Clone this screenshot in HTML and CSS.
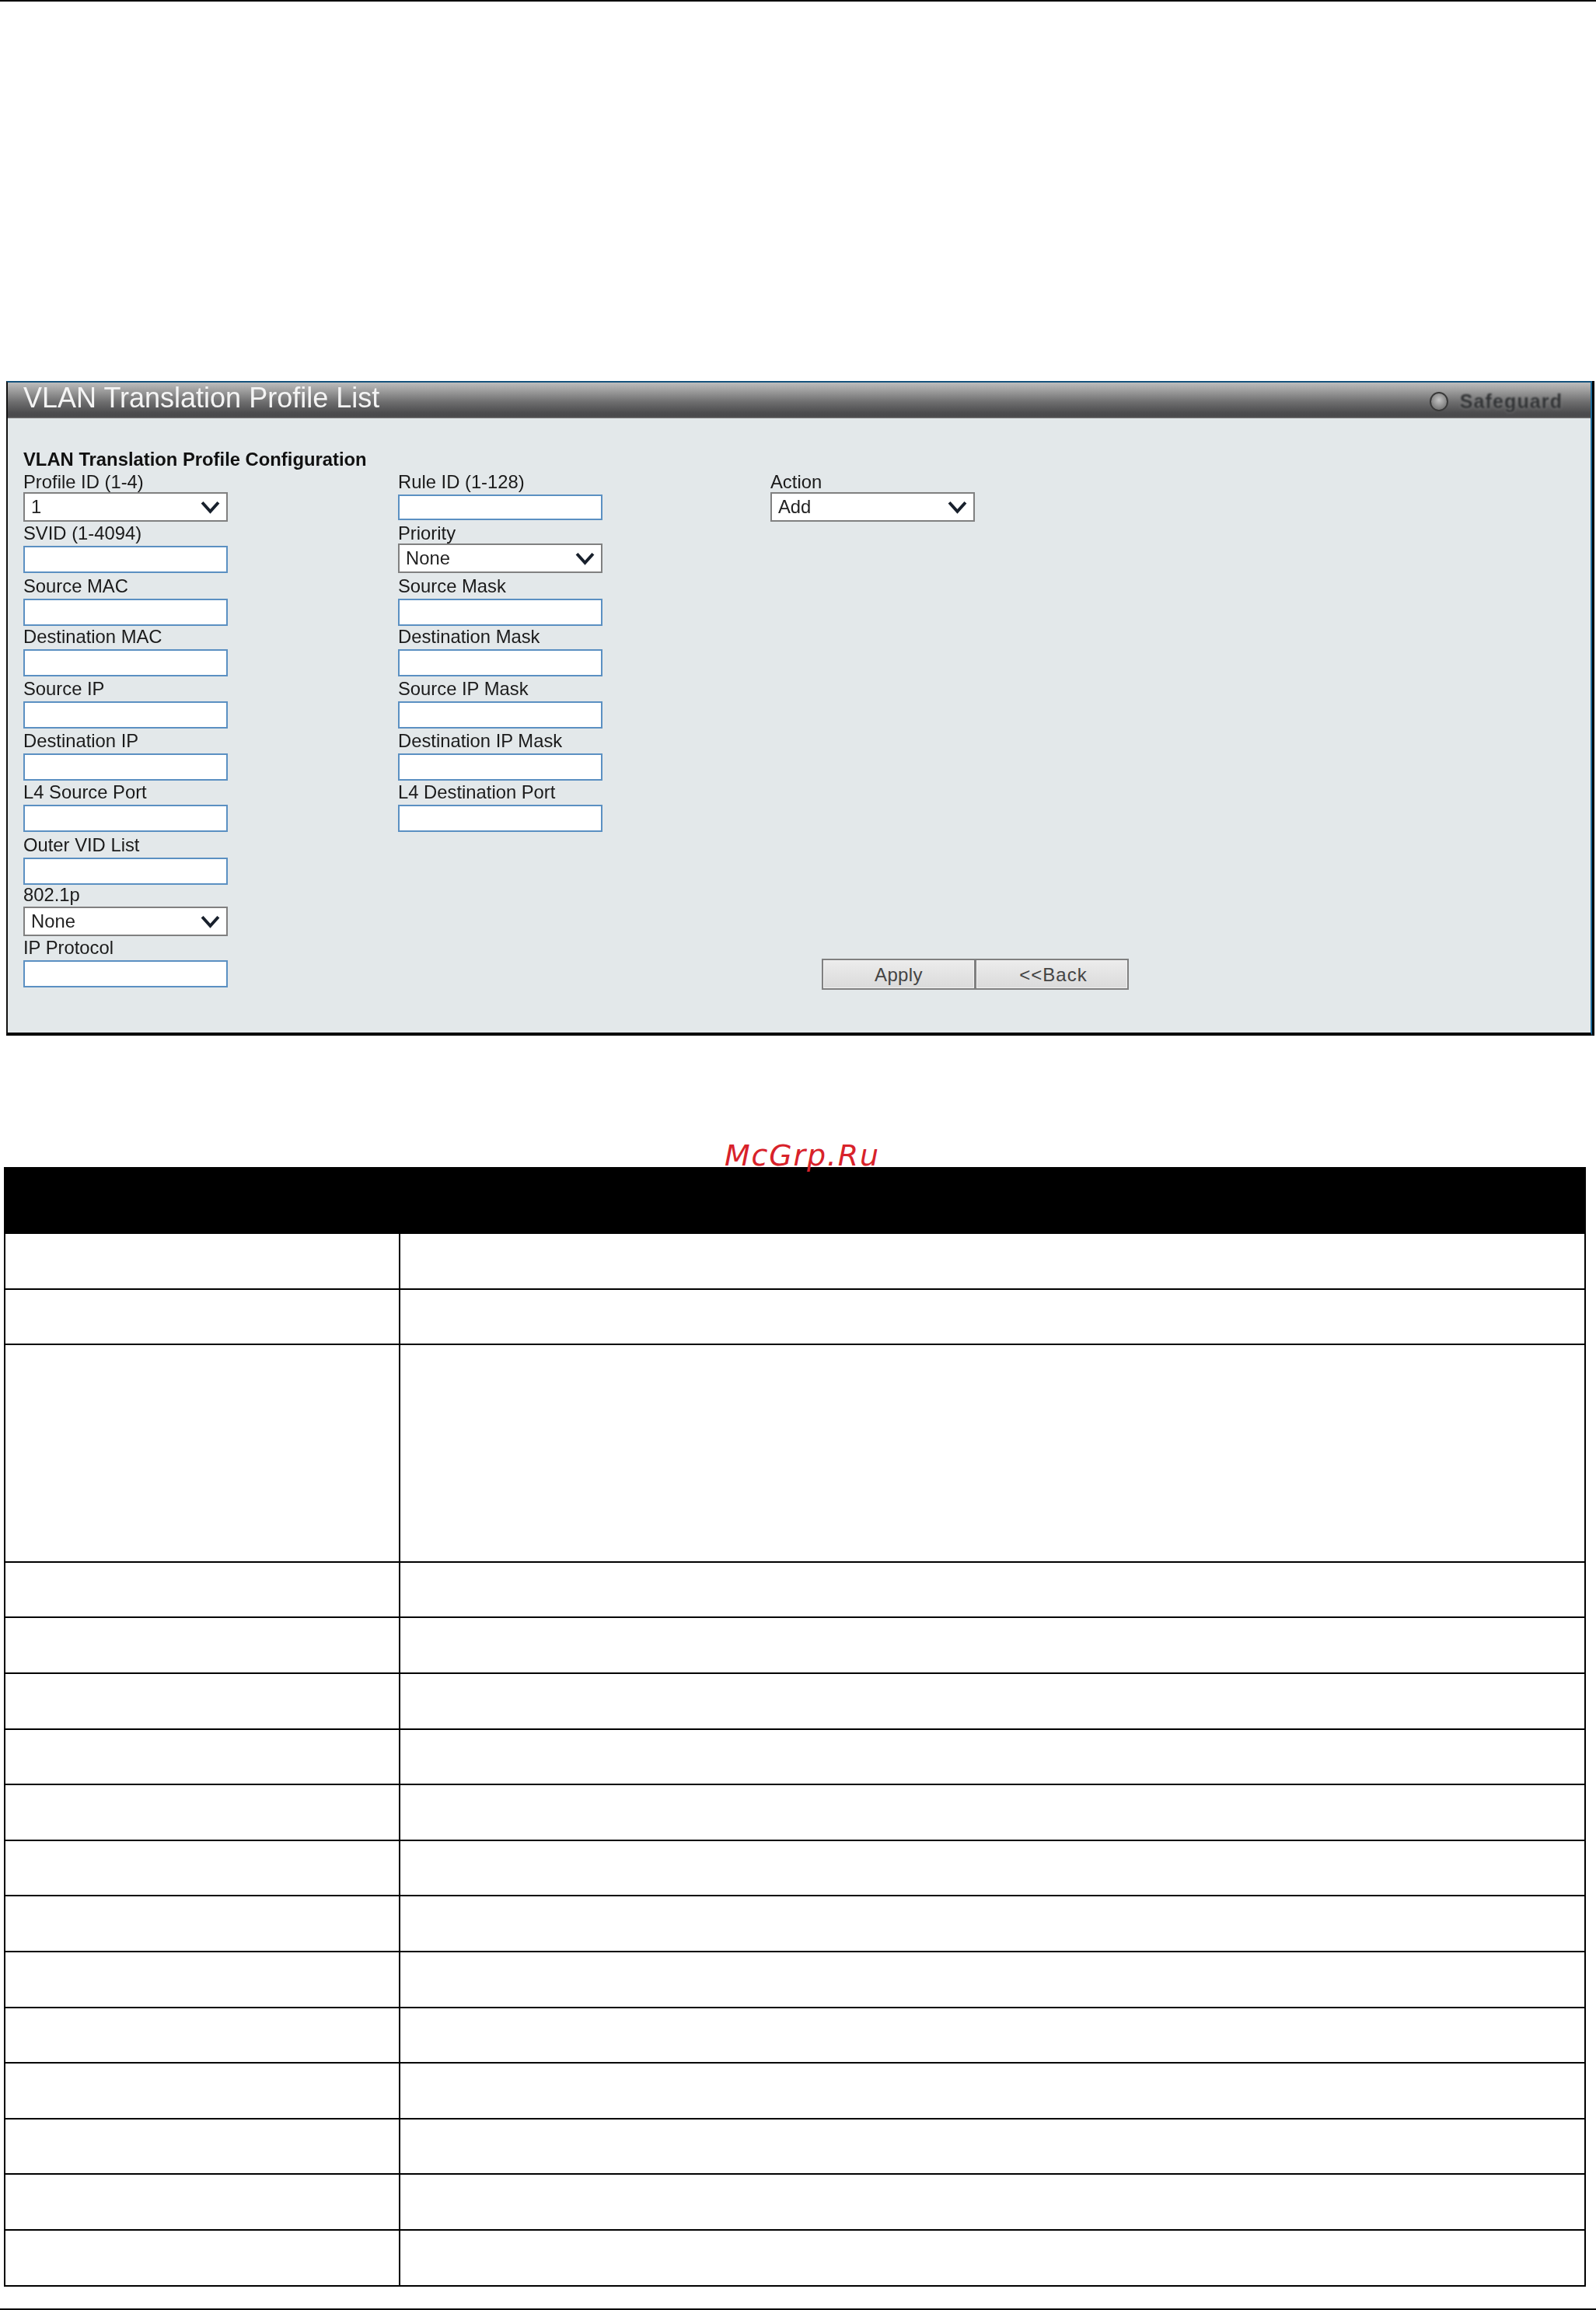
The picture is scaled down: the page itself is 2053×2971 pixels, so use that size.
FILE: index.html
```html
<!DOCTYPE html>
<html lang="en">
<head>
<meta charset="utf-8">
<title>VLAN Translation Profile List</title>
<link rel="stylesheet" href="styles.css">
</head>
<body>
<section class="panel">
  <header class="titlebar">
    <h1 class="title">VLAN Translation Profile List</h1>
    <div class="safeguard"><span class="led"></span><span class="safe-text">Safeguard</span></div>
  </header>
  <div class="panel-body">
    <h2 class="heading">VLAN Translation Profile Configuration</h2>
    <div class="form-grid">
      <div class="field"><label class="label">Profile ID (1-4)</label><div class="select"><span>1</span><svg class="chev" viewBox="0 0 24 16"><polyline points="2,2 12,13 22,2"/></svg></div></div>
      <div class="field"><label class="label">Rule ID (1-128)</label><div class="input input-short"></div></div>
      <div class="field"><label class="label">Action</label><div class="select"><span>Add</span><svg class="chev" viewBox="0 0 24 16"><polyline points="2,2 12,13 22,2"/></svg></div></div>

      <div class="field"><label class="label">SVID (1-4094)</label><div class="input"></div></div>
      <div class="field field-wide"><label class="label">Priority</label><div class="select"><span>None</span><svg class="chev" viewBox="0 0 24 16"><polyline points="2,2 12,13 22,2"/></svg></div></div>

      <div class="field"><label class="label">Source MAC</label><div class="input"></div></div>
      <div class="field field-wide"><label class="label">Source Mask</label><div class="input"></div></div>

      <div class="field"><label class="label">Destination MAC</label><div class="input"></div></div>
      <div class="field field-wide"><label class="label">Destination Mask</label><div class="input"></div></div>

      <div class="field"><label class="label">Source IP</label><div class="input"></div></div>
      <div class="field field-wide"><label class="label">Source IP Mask</label><div class="input"></div></div>

      <div class="field"><label class="label">Destination IP</label><div class="input"></div></div>
      <div class="field field-wide"><label class="label">Destination IP Mask</label><div class="input"></div></div>

      <div class="field"><label class="label">L4 Source Port</label><div class="input"></div></div>
      <div class="field field-wide"><label class="label">L4 Destination Port</label><div class="input"></div></div>

      <div class="field field-full"><label class="label">Outer VID List</label><div class="input"></div></div>

      <div class="field field-full"><label class="label">802.1p</label><div class="select select-low"><span>None</span><svg class="chev" viewBox="0 0 24 16"><polyline points="2,2 12,13 22,2"/></svg></div></div>

      <div class="field"><label class="label">IP Protocol</label><div class="input"></div></div>
      <div class="empty-cell"></div>
      <div class="buttons"><button class="btn" type="button">Apply</button><button class="btn btn-back" type="button">&lt;&lt;Back</button></div>
    </div>
  </div>
</section>

<div class="table-wrap">
  <div class="watermark">McGrp.Ru</div>
  <div class="table">
    <div class="thead"></div>
    <div class="row"><div class="cell-a"></div><div class="cell-b"></div></div>
    <div class="row"><div class="cell-a"></div><div class="cell-b"></div></div>
    <div class="row row-tall"><div class="cell-a"></div><div class="cell-b"></div></div>
    <div class="row"><div class="cell-a"></div><div class="cell-b"></div></div>
    <div class="row"><div class="cell-a"></div><div class="cell-b"></div></div>
    <div class="row"><div class="cell-a"></div><div class="cell-b"></div></div>
    <div class="row"><div class="cell-a"></div><div class="cell-b"></div></div>
    <div class="row"><div class="cell-a"></div><div class="cell-b"></div></div>
    <div class="row"><div class="cell-a"></div><div class="cell-b"></div></div>
    <div class="row"><div class="cell-a"></div><div class="cell-b"></div></div>
    <div class="row"><div class="cell-a"></div><div class="cell-b"></div></div>
    <div class="row"><div class="cell-a"></div><div class="cell-b"></div></div>
    <div class="row"><div class="cell-a"></div><div class="cell-b"></div></div>
    <div class="row"><div class="cell-a"></div><div class="cell-b"></div></div>
    <div class="row"><div class="cell-a"></div><div class="cell-b"></div></div>
    <div class="row"><div class="cell-a"></div><div class="cell-b"></div></div>
  </div>
</div>
</body>
</html>
```
FILE: styles.css
```css
* { box-sizing: border-box; }
html, body { margin: 0; padding: 0; background: #fff; }
body {
  height: 2971px;
  border-top: 2px solid #000;
  border-bottom: 2px solid #000;
  font-family: "Liberation Sans", Arial, sans-serif;
  color: #151515;
  overflow: hidden;
}

.panel {
  margin: 488px 0 0 8px;
  width: 2040px;
  height: 842px;
  border-style: solid;
  border-width: 2px;
  border-color: #14527c #1a6a9a #000 #111;
  border-bottom-width: 4px;
  box-shadow: 3px 0 0 #000;
  background: #e3e8ea;
  display: flex;
  flex-direction: column;
}
.titlebar {
  height: 46px;
  flex: none;
  display: flex;
  align-items: center;
  justify-content: space-between;
  padding: 0 36px 0 20px;
  background: linear-gradient(#bdbdbd 0%, #9a9a9a 25%, #6d6d6e 55%, #4c4c4e 85%, #4a4a4c 96%, #808080 100%);
}
.title {
  margin: 0 0 6px;
  font-size: 36px;
  font-weight: 400;
  line-height: 42px;
  color: #f4f4f4;
  filter: blur(0.4px);
}
.safeguard { display: flex; align-items: center; gap: 15px; padding-top: 2px; }
.led {
  width: 24px;
  height: 25px;
  border-radius: 50%;
  border: 2px solid #3a3a3a;
  background: radial-gradient(circle at 50% 40%, #c4c4c4, #7d7d7d 70%);
  filter: blur(0.6px);
}
.safe-text {
  font-size: 25px;
  font-weight: 700;
  letter-spacing: 1.1px;
  color: #2f3133;
  text-shadow: 0 0 3px #9a9a9a;
  filter: blur(0.8px);
}

.panel-body { padding: 39px 0 0 20px; flex: 1; }
.heading {
  margin: 0 0 2px;
  font-size: 23.8px;
  font-weight: 700;
  line-height: 27px;
  color: #111;
  filter: blur(0.4px);
}
.form-grid {
  display: grid;
  grid-template-columns: 482px 479px 1fr;
  grid-template-rows: 66px 68px 65px 67px 67px 66px 68px 64px 68px 70px;
}
.field-wide { grid-column: 2 / span 2; }
.field-full { grid-column: 1 / -1; }
.label {
  display: block;
  height: 27px;
  font-size: 23.8px;
  line-height: 27px;
  color: #1a1a1a;
  filter: blur(0.4px);
}
.input {
  width: 263px;
  height: 35px;
  margin-top: 3px;
  background: #fff;
  border: 2px solid #5b90c2;
}
.input-short { height: 33px; }
.select {
  width: 263px;
  height: 38px;
  display: flex;
  align-items: center;
  justify-content: space-between;
  padding: 0 8px;
  background: #fff;
  border: 2px solid #808080;
  font-size: 23.8px;
  color: #222;
}
.select span { filter: blur(0.4px); }
.select-low { margin-top: 2px; }
.chev { width: 25px; height: 17px; flex: none; fill: none; stroke: #18202c; stroke-width: 3.8; }

.buttons { display: flex; margin: 28px 0 0 66px; }
.btn {
  width: 198px;
  height: 40px;
  padding: 2px 0 0;
  border: 2px solid #808080;
  box-shadow: inset 0 0 0 1px #f2f2f2;
  background: linear-gradient(#ececec, #dadada);
  font-family: "Liberation Sans", Arial, sans-serif;
  font-size: 24px;
  letter-spacing: 0.4px;
  color: #444;
}
.btn-back { margin-left: -1px; letter-spacing: 1px; padding-left: 4px; }

.table-wrap { position: relative; margin: 169px 0 0 5px; width: 2035px; }
.watermark {
  position: absolute;
  left: 927px;
  top: -38px;
  font-family: "DejaVu Sans", sans-serif;
  font-style: italic;
  font-size: 38px;
  line-height: 46px;
  letter-spacing: 1.8px;
  color: #d8222a;
  z-index: 1;
}
.table { border-left: 2px solid #000; border-right: 2px solid #000; }
.thead { height: 86px; margin: 0 -2px; background: #000; }
.row {
  height: 71.6px;
  display: grid;
  grid-template-columns: 508px 1fr;
  border-bottom: 2px solid #000;
}
.row-tall { height: 279.6px; }
.cell-a { border-right: 2px solid #000; }
.cell-b { background: #fff; }
```
